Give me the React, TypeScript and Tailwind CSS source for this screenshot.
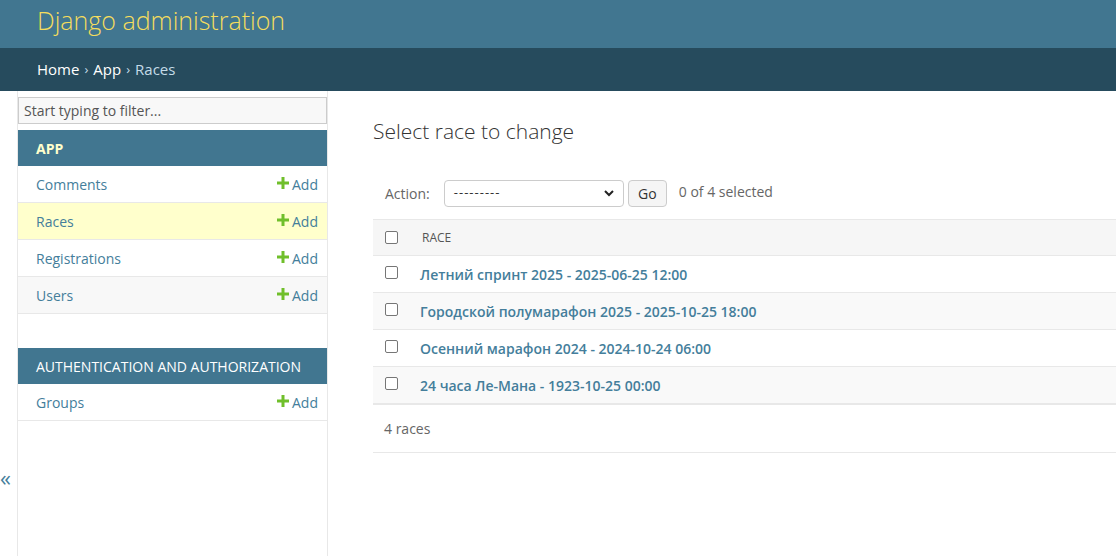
import React from "react";

const font = { fontFamily: '"Open Sans", "Noto Sans", Arial, sans-serif' };

function Plus() {
  return (
    <svg width="12" height="12" viewBox="0 0 12 12" className="inline-block mr-[3px] -mt-[3px]">
      <path d="M4.5 0h3v4.5H12v3H7.5V12h-3V7.5H0v-3h4.5z" fill="#70bf2b" />
    </svg>
  );
}

function Row({ name, bg }: { name: string; bg: string }) {
  return (
    <div className={`flex items-center justify-between h-[37px] border-b border-[#e8e8e8] pl-[18px] pr-[9px] ${bg}`}>
      <span className="text-[#447e9b] text-[14px]">{name}</span>
      <span className="text-[#447e9b] text-[14px] flex items-center">
        <Plus />
        Add
      </span>
    </div>
  );
}

function Checkbox() {
  return <span className="inline-block w-[13px] h-[13px] border border-[#767676] rounded-[2px] bg-white" />;
}

const races = [
  "Летний спринт 2025 - 2025-06-25 12:00",
  "Городской полумарафон 2025 - 2025-10-25 18:00",
  "Осенний марафон 2024 - 2024-10-24 06:00",
  "24 часа Ле-Мана - 1923-10-25 00:00",
];

export default function App() {
  return (
    <div style={font} className="w-[1116px] h-[556px] overflow-hidden bg-white text-[#333]">
      <header className="h-[48px] bg-[#417690] flex items-center pl-[37px]">
        <h1 className="text-[#f5dd5d] text-[25px] font-light leading-none -mt-[8px]">Django administration</h1>
      </header>
      <nav className="h-[43px] bg-[#264b5d] flex items-center pl-[37px] text-[15px] text-white">
        <span>Home</span>
        <span className="mx-[5px] text-[#c4dce8] text-[13px]">›</span>
        <span>App</span>
        <span className="mx-[5px] text-[#c4dce8] text-[13px]">›</span>
        <span className="text-[#c4dce8]">Races</span>
      </nav>
      <div className="flex h-[465px]">
        <div className="w-[18px] border-r border-[#e8e8e8] flex flex-col items-center pt-[375px]">
          <span className="text-[#447e9b] text-[22px] leading-none -ml-[6px]">«</span>
        </div>
        <aside className="w-[310px] border-r border-[#e8e8e8] shrink-0">
          <div className="my-[6px] h-[27px] border border-[#ccc] bg-[#f8f8f8] flex items-center px-[5px] text-[14px] text-[#555]">
            Start typing to filter...
          </div>
          <div className="h-[36px] bg-[#417690] flex items-center pl-[18px] text-[14px] font-bold text-[#ffc]">APP</div>
          <Row name="Comments" bg="bg-white" />
          <Row name="Races" bg="bg-[#ffc]" />
          <Row name="Registrations" bg="bg-white" />
          <Row name="Users" bg="bg-[#f8f8f8]" />
          <div className="h-[34px]" />
          <div className="h-[36px] bg-[#417690] flex items-center pl-[18px] text-[14px] text-white">AUTHENTICATION AND AUTHORIZATION</div>
          <Row name="Groups" bg="bg-white" />
        </aside>
        <main className="flex-1 pl-[45px] pt-[26px]">
          <h1 className="text-[21px] font-light text-[#333] leading-[28px]">Select race to change</h1>
          <div className="mt-[35px] flex items-center h-[26px] pl-[12px] text-[14px] text-[#666]">
            <span className="mr-[14px]">Action:</span>
            <div className="w-[180px] h-[27px] border border-[#ccc] rounded-[4px] flex items-center justify-between px-[9px] text-[#333]">
              <span className="text-[13px] tracking-[1px]">---------</span>
              <svg width="10" height="7" viewBox="0 0 10 7"><path d="M1 1l4 4 4-4" stroke="#222" strokeWidth="2" fill="none" /></svg>
            </div>
            <div className="ml-[4px] w-[39px] h-[27px] border border-[#ccc] rounded-[4px] bg-[#f5f5f5] flex items-center justify-center text-[#333]">Go</div>
            <span className="ml-[12px] text-[14px] -mt-[3px]">0 of 4 selected</span>
          </div>
          <div className="mt-[13px]">
            <div className="h-[37px] bg-[#f6f6f6] border-y border-[#e8e8e8] flex items-center pl-[12px]">
              <Checkbox />
              <span className="ml-[24px] text-[12px] text-[#555] font-medium">RACE</span>
            </div>
            {races.map((r, i) => (
              <div key={r} className={`h-[37px] border-b border-[#e8e8e8] flex items-center pl-[12px] ${i % 2 ? "bg-[#f9f9f9]" : "bg-white"}`}>
                <span className="-mt-[3px] flex"><Checkbox /></span>
                <span className="ml-[22px] text-[14px] font-semibold text-[#447e9b]">{r}</span>
              </div>
            ))}
            <div className="h-[49px] border-t border-b border-[#e8e8e8] flex items-center pl-[11px] text-[14px] text-[#666]">4 races</div>
          </div>
        </main>
      </div>
    </div>
  );
}
